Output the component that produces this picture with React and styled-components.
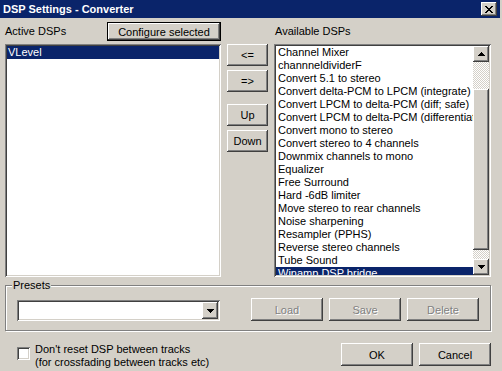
import React from "react";
import styled, { createGlobalStyle, css } from "styled-components";

const GlobalStyle = createGlobalStyle`
  * { box-sizing: border-box; }
  html, body { margin: 0; padding: 0; background: #d4d0c8; }
  body {
    font-family: "Liberation Sans", Arial, sans-serif;
    font-size: 11px;
    color: #000;
  }
`;

const raised = css`
  background: #d4d0c8;
  box-shadow: inset -1px -1px #404040, inset 1px 1px #fff,
    inset -2px -2px #808080, inset 2px 2px #d4d0c8;
`;

const sunken = css`
  background: #fff;
  box-shadow: inset 1px 1px #808080, inset -1px -1px #fff,
    inset 2px 2px #404040, inset -2px -2px #d4d0c8;
`;

const dither = css`
  background: repeating-conic-gradient(#d4d0c8 0% 25%, #fff 0% 50%) 0 0 / 2px 2px;
`;

const Window = styled.div`
  width: 502px;
  height: 371px;
  overflow: hidden;
  background: #d4d0c8;
  display: flex;
  flex-direction: column;
`;

const TitleBar = styled.div`
  height: 18px;
  margin-right: 2px;
  padding: 0 3px;
  background: #0a246a;
  color: #fff;
  display: flex;
  align-items: center;
  justify-content: space-between;
`;

const TitleText = styled.span`
  font-weight: bold;
  font-size: 11px;
  line-height: 13px;
`;

const CloseButton = styled.div`
  width: 16px;
  height: 14px;
  ${raised}
  display: flex;
  align-items: center;
  justify-content: center;
`;

const Content = styled.div`
  padding: 4px 11px 0 5px;
  display: flex;
  flex-direction: column;
`;

const DspGrid = styled.div`
  display: grid;
  grid-template-columns: 216px 41px 217px;
  grid-template-rows: 19px 233px;
  column-gap: 6px;
  row-gap: 3px;
`;

const HeaderCell = styled.div`
  display: flex;
  align-items: center;
  justify-content: space-between;
  padding-left: ${({ $indent }) => $indent || 0}px;
`;

const Label = styled.span`
  line-height: 13px;
`;

const Button = styled.button`
  width: ${({ $w }) => $w}px;
  height: ${({ $h }) => $h || 23}px;
  margin-top: ${({ $mt }) => $mt || 0}px;
  padding: 0;
  border: none;
  font-family: "Liberation Sans", Arial, sans-serif;
  font-size: 11px;
  color: #000;
  flex-shrink: 0;
  ${raised}
  ${({ $default }) => $default && css`border: 1px solid #000;`}
  ${({ $disabled }) =>
    $disabled &&
    css`
      color: #808080;
      text-shadow: 1px 1px 0 #fff;
    `}
`;

const ButtonStack = styled.div`
  display: flex;
  flex-direction: column;
  gap: 4px;
`;

const ListBox = styled.div`
  ${sunken}
  padding: 2px;
  overflow: hidden;
  display: flex;
`;

const ListItems = styled.div`
  flex: 1;
  min-width: 0;
  overflow: hidden;
`;

const ListItem = styled.div`
  height: 13px;
  line-height: 13px;
  padding-left: ${({ $pad }) => $pad || 1}px;
  white-space: nowrap;
  overflow: hidden;
  ${({ $selected }) =>
    $selected &&
    css`
      background: #0a246a;
      color: #fff;
    `}
`;

const ScrollBar = styled.div`
  width: 16px;
  flex-shrink: 0;
  display: flex;
  flex-direction: column;
`;

const ScrollArrow = styled.div`
  width: 16px;
  height: 16px;
  flex-shrink: 0;
  ${raised}
  display: flex;
  align-items: center;
  justify-content: center;
`;

const ScrollTrack = styled.div`
  ${dither}
  height: ${({ $h }) => ($h ? `${$h}px` : "auto")};
  flex: ${({ $h }) => ($h ? "0 0 auto" : "1")};
`;

const ScrollThumb = styled.div`
  height: ${({ $h }) => $h}px;
  flex-shrink: 0;
  ${raised}
`;

const ArrowGlyph = styled.svg`
  display: block;
  transform: ${({ $up }) => ($up ? "rotate(180deg)" : "none")};
`;

const PresetGroup = styled.fieldset`
  margin: 2px 0 0;
  padding: 6px 11px 9px 11px;
  min-width: 0;
  border: 1px solid #808080;
  box-shadow: inset 1px 1px #fff, 1px 1px #fff;
`;

const GroupLegend = styled.legend`
  margin-left: -5px;
  padding: 0 1px;
  line-height: 13px;
  font-size: 11px;
  background: #d4d0c8;
`;

const PresetRow = styled.div`
  display: flex;
  align-items: flex-start;
  gap: 6px;
`;

const Combo = styled.div`
  width: 203px;
  height: 21px;
  margin-top: 2px;
  margin-right: 25px;
  ${sunken}
  padding: 2px;
  display: flex;
  justify-content: flex-end;
`;

const ComboButton = styled(ScrollArrow)`
  height: 17px;
`;

const Footer = styled.div`
  margin-top: 12px;
  display: flex;
  align-items: flex-start;
`;

const CheckRow = styled.div`
  display: flex;
  align-items: flex-start;
  padding-left: 12px;
`;

const CheckBox = styled.div`
  width: 13px;
  height: 13px;
  margin-top: 4px;
  ${sunken}
`;

const CheckText = styled.div`
  margin-left: 5px;
  line-height: 13px;
`;

const DialogButtons = styled.div`
  margin-left: auto;
  display: flex;
  gap: 6px;
`;

const Arrow = ({ up }) => (
  <ArrowGlyph $up={up} width="7" height="4" viewBox="0 0 7 4" shapeRendering="crispEdges">
    <path d="M0 0h7v1H0z M1 1h5v1H1z M2 2h3v1H2z M3 3h1v1H3z" fill="#000" />
  </ArrowGlyph>
);

const CloseGlyph = () => (
  <svg width="8" height="7" viewBox="0 0 8 7" shapeRendering="crispEdges">
    <path
      d="M0 0h2v1H0z M6 0h2v1H6z M1 1h2v1H1z M5 1h2v1H5z M2 2h4v1H2z M3 3h2v1H3z M2 4h4v1H2z M1 5h2v1H1z M5 5h2v1H5z M0 6h2v1H0z M6 6h2v1H6z"
      fill="#000"
    />
  </svg>
);

const availableDsps = [
  "Channel Mixer",
  "channneldividerF",
  "Convert 5.1 to stereo",
  "Convert delta-PCM to LPCM (integrate)",
  "Convert LPCM to delta-PCM (diff; safe)",
  "Convert LPCM to delta-PCM (differentiate)",
  "Convert mono to stereo",
  "Convert stereo to 4 channels",
  "Downmix channels to mono",
  "Equalizer",
  "Free Surround",
  "Hard -6dB limiter",
  "Move stereo to rear channels",
  "Noise sharpening",
  "Resampler (PPHS)",
  "Reverse stereo channels",
  "Tube Sound",
  "Winamp DSP bridge",
];

export default function App() {
  return (
    <>
      <GlobalStyle />
      <Window>
        <TitleBar>
          <TitleText>DSP Settings - Converter</TitleText>
          <CloseButton>
            <CloseGlyph />
          </CloseButton>
        </TitleBar>

        <Content>
          <DspGrid>
            <HeaderCell>
              <Label>Active DSPs</Label>
              <Button $w={114} $h={19} $default>Configure selected</Button>
            </HeaderCell>
            <div />
            <HeaderCell $indent={1}>
              <Label>Available DSPs</Label>
            </HeaderCell>

            <ListBox>
              <ListItems>
                <ListItem $selected>VLevel</ListItem>
              </ListItems>
            </ListBox>

            <ButtonStack>
              <Button $w={41} $h={22}>&lt;=</Button>
              <Button $w={41} $h={22}>=&gt;</Button>
              <Button $w={41} $h={22} $mt={8}>Up</Button>
              <Button $w={41} $h={22}>Down</Button>
            </ButtonStack>

            <ListBox>
              <ListItems>
                {availableDsps.map((name) => (
                  <ListItem key={name} $pad={2} $selected={name === "Winamp DSP bridge"}>
                    {name}
                  </ListItem>
                ))}
              </ListItems>
              <ScrollBar>
                <ScrollArrow>
                  <Arrow up />
                </ScrollArrow>
                <ScrollTrack $h={27} />
                <ScrollThumb $h={161} />
                <ScrollTrack />
                <ScrollArrow>
                  <Arrow />
                </ScrollArrow>
              </ScrollBar>
            </ListBox>
          </DspGrid>

          <PresetGroup>
            <GroupLegend>Presets</GroupLegend>
            <PresetRow>
              <Combo>
                <ComboButton>
                  <Arrow />
                </ComboButton>
              </Combo>
              <Button $w={72} $disabled>Load</Button>
              <Button $w={72} $disabled>Save</Button>
              <Button $w={72} $disabled>Delete</Button>
            </PresetRow>
          </PresetGroup>

          <Footer>
            <CheckRow>
              <CheckBox />
              <CheckText>
                Don't reset DSP between tracks
                <br />
                (for crossfading between tracks etc)
              </CheckText>
            </CheckRow>
            <DialogButtons>
              <Button $w={72}>OK</Button>
              <Button $w={72}>Cancel</Button>
            </DialogButtons>
          </Footer>
        </Content>
      </Window>
    </>
  );
}
